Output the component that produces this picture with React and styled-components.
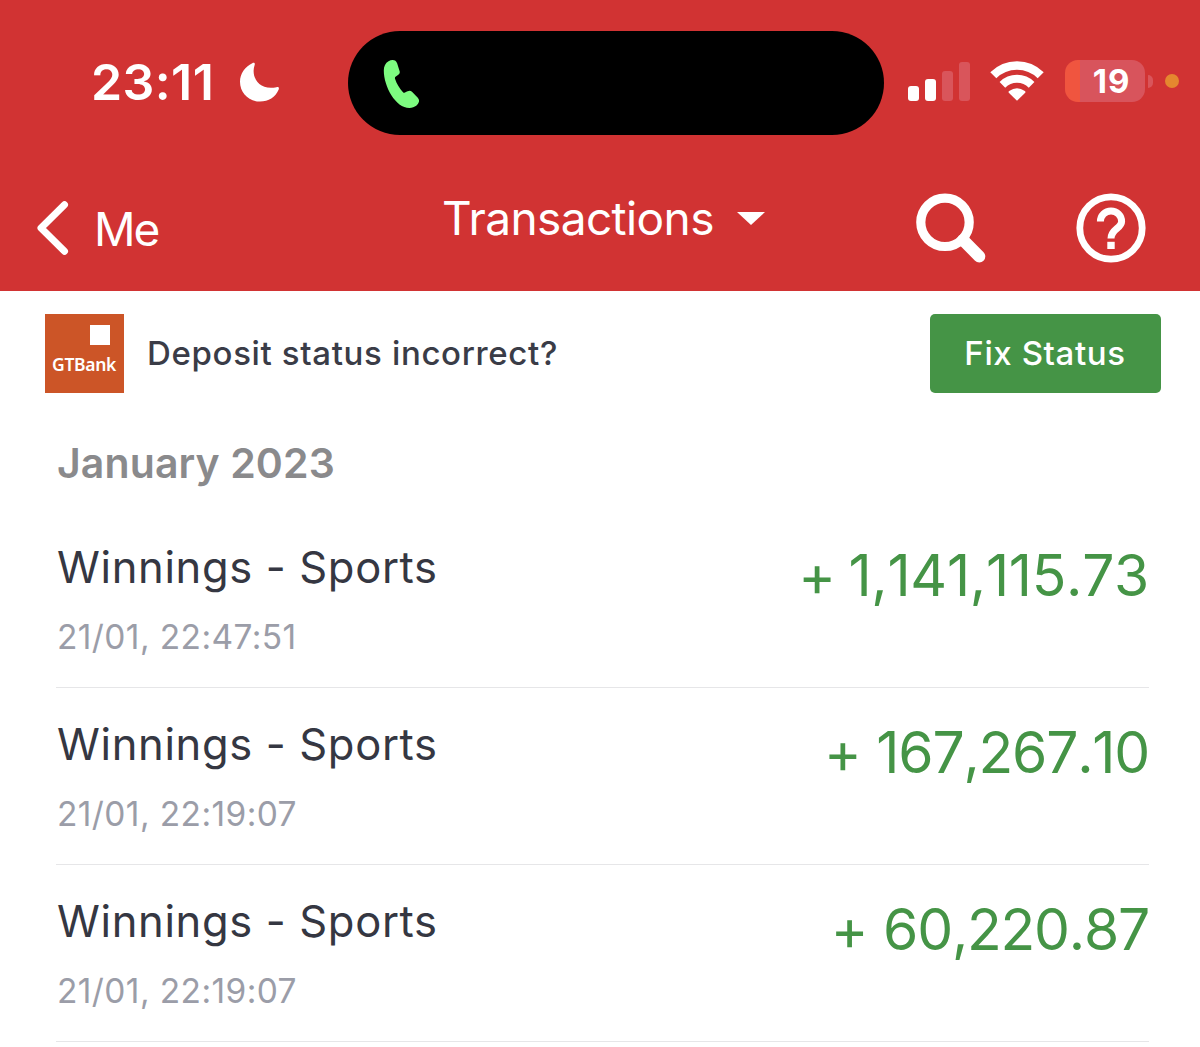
import React from 'react';
import styled, { createGlobalStyle } from 'styled-components';

const GlobalStyle = createGlobalStyle`
  * {
    box-sizing: border-box;
  }
  body {
    margin: 0;
    background-color: #ffffff;
    font-family: Inter, 'Liberation Sans', sans-serif;
  }
  svg {
    display: block;
    flex-shrink: 0;
  }
`;

const Screen = styled.div`
  width: 1200px;
  height: 1047px;
  overflow: hidden;
  background-color: #ffffff;
`;

const Header = styled.header`
  height: 291px;
  background-color: #d13333;
  color: #ffffff;
`;

const StatusBar = styled.div`
  display: grid;
  grid-template-columns: 348px 536px 1fr;
  height: 166px;
  padding-top: 31px;
  align-items: start;
`;

const StatusLeft = styled.div`
  display: flex;
  align-items: center;
  height: 102px;
  padding-left: 91px;
`;

const Clock = styled.span`
  width: 149px;
  font-size: 50px;
  font-weight: 600;
  line-height: 60px;
  letter-spacing: 0.4px;
  white-space: nowrap;
`;

const Island = styled.div`
  height: 104px;
  padding: 28px 0 0 35px;
  border-radius: 52px;
  background-color: #000000;
`;

const StatusRight = styled.div`
  display: flex;
  align-items: center;
  height: 100px;
  padding-left: 24px;
`;

const Signal = styled.div`
  display: flex;
  align-items: flex-end;
  gap: 6px;
  height: 39px;
  margin-right: 20px;
`;

const SignalBar = styled.span`
  width: 11px;
  height: ${(props) => props.$height}px;
  border-radius: 3px;
  background-color: ${(props) => (props.$active ? '#ffffff' : '#d9555b')};
`;

const Battery = styled.div`
  display: flex;
  align-items: center;
  justify-content: center;
  width: 80px;
  height: 42px;
  margin-left: 21px;
  padding-left: 13px;
  border-radius: 13px;
  background: linear-gradient(to right, #f0553f 15px, #d8545c 15px);
  font-size: 33px;
  font-weight: 700;
  line-height: 42px;
  letter-spacing: 1px;
`;

const BatteryCap = styled.span`
  width: 5px;
  height: 13px;
  margin-left: 3px;
  border-radius: 0 6px 6px 0;
  background-color: #d9555b;
`;

const MicDot = styled.span`
  width: 14px;
  height: 14px;
  margin-left: 12px;
  border-radius: 50%;
  background-color: #e5872f;
`;

const NavBar = styled.nav`
  display: grid;
  grid-template-columns: 442px 1fr 284px;
  height: 125px;
`;

const BackLink = styled.div`
  display: flex;
  align-items: center;
  height: 124px;
  padding-left: 36px;
  gap: 24px;
`;

const BackLabel = styled.span`
  padding-top: 2px;
  font-size: 46px;
  font-weight: 400;
  line-height: 56px;
  letter-spacing: -2px;
`;

const PageTitle = styled.div`
  display: flex;
  align-items: center;
  height: 104px;
  font-size: 46px;
  line-height: 56px;
  letter-spacing: -0.6px;
  white-space: nowrap;
  gap: 23px;
`;

const NavActions = styled.div`
  display: flex;
  align-items: center;
  height: 124px;
  gap: 90px;
`;

const Notice = styled.section`
  display: flex;
  align-items: center;
  height: 124px;
  padding: 0 39px 0 45px;
`;

const BankLogo = styled.div`
  display: flex;
  flex-direction: column;
  width: 79px;
  height: 79px;
  padding: 11px 0 0 7px;
  background-color: #cc5527;
  color: #ffffff;
  font-family: 'Noto Sans', 'Open Sans', sans-serif;
  font-size: 17.5px;
  font-weight: 600;
  line-height: 24px;
  letter-spacing: -0.3px;
`;

const LogoSquare = styled.span`
  width: 20px;
  height: 20px;
  margin: 0 0 7px 38px;
  background-color: #ffffff;
`;

const NoticeText = styled.span`
  flex: 1;
  margin-left: 23px;
  color: #3a3c47;
  font-size: 33px;
  font-weight: 500;
  line-height: 42px;
  letter-spacing: 0.65px;
`;

const FixButton = styled.button`
  width: 231px;
  height: 79px;
  padding: 0 1px 0 0;
  border: none;
  border-radius: 5px;
  background-color: #459446;
  color: #ffffff;
  font-family: inherit;
  font-size: 33px;
  font-weight: 500;
  line-height: 42px;
  letter-spacing: 0.6px;
`;

const MonthTitle = styled.h2`
  height: 96px;
  margin: 0;
  padding: 23px 0 0 57px;
  color: #8a8a8c;
  font-size: 41px;
  font-weight: 600;
  line-height: 50px;
  letter-spacing: 0.1px;
`;

const List = styled.ul`
  margin: 0;
  padding: 0 51px 0 56px;
  list-style: none;
`;

const Row = styled.li`
  display: flex;
  justify-content: space-between;
  height: 177px;
  padding-top: 26px;
  border-bottom: 1px solid #e6e6e8;
`;

const RowTitle = styled.div`
  padding-left: 1px;
  color: #353742;
  font-size: 43.5px;
  line-height: 60px;
  letter-spacing: 0.65px;
`;

const RowDate = styled.div`
  margin-top: 20px;
  padding-left: 1px;
  color: #9b9da8;
  font-size: 33.5px;
  line-height: 40px;
  letter-spacing: 0.4px;
`;

const Amount = styled.div`
  padding-top: 2px;
  color: #459446;
  font-size: 57px;
  font-kerning: none;
  line-height: 74px;
  letter-spacing: ${(props) => (props.$tight ? '-1.25px' : '-0.3px')};
  word-spacing: ${(props) => (props.$tight ? '1px' : '-3px')};
`;

const signalBars = [
  { height: 15, active: true },
  { height: 22, active: true },
  { height: 30, active: false },
  { height: 39, active: false },
];

const transactions = [
  { title: 'Winnings - Sports', date: '21/01, 22:47:51', amount: '+ 1,141,115.73' },
  { title: 'Winnings - Sports', date: '21/01, 22:19:07', amount: '+ 167,267.10' },
  { title: 'Winnings - Sports', date: '21/01, 22:19:07', amount: '+ 60,220.87' },
];

const MoonIcon = () => (
  <svg width="40" height="40" viewBox="0 0 40 40" fill="#ffffff">
    <path d="M12.3 1.2C13.8 .4 15.3 1 14.7 2.7C10.5 14.5 18.5 29 36.5 25.2C38.5 24.7 39.4 25.8 38.6 27.7C35.5 35 28.5 39.5 20 39.5C8.8 39.5 0 31 0 19.8C0 11.5 5 4.5 12.3 1.2Z" />
  </svg>
);

const PhoneIcon = () => (
  <svg width="38" height="50" viewBox="0 0 38 50" fill="#7dfc80">
    <path d="M5.5 2.2C9 .2 13 .5 14.2 4.5L16.7 12.5C17.2 15 15.5 15.8 12.5 17.8C11.8 18.3 11.8 19 12.1 20C13.8 25 16.5 29.5 20 33.2C20.6 33.8 21.2 33.9 22 33.5C25.5 31.6 27 30.9 29 32.8L34.8 38.8C38.5 42.6 33.5 49 26.5 49C12.5 49 .8 27.5 .8 11.5C.8 7 2.5 4 5.5 2.2Z" />
  </svg>
);

const WifiIcon = () => (
  <svg width="54" height="40" viewBox="0 0 54 40" fill="none" stroke="#ffffff">
    <path d="M3.3 14.2A33.5 33.5 0 0 1 50.7 14.2" strokeWidth="8.5" />
    <path d="M12.4 23.8A20.8 20.8 0 0 1 41.6 23.8" strokeWidth="8" />
    <path d="M27 39.8L18.8 31.7Q18 30.8 19.2 29.9Q27 24.8 34.8 29.9Q36 30.8 35.2 31.7Z" fill="#ffffff" stroke="none" />
  </svg>
);

const ChevronIcon = () => (
  <svg width="34" height="54" viewBox="0 0 34 54" fill="none" stroke="#ffffff">
    <path d="M28.5 3.8L5 27L28.5 50.2" strokeWidth="7" strokeLinecap="round" strokeLinejoin="round" />
  </svg>
);

const CaretIcon = () => (
  <svg width="28" height="13" viewBox="0 0 28 13" fill="#ffffff">
    <path d="M0 0H28L14 13Z" />
  </svg>
);

const SearchIcon = () => (
  <svg width="70" height="70" viewBox="0 0 70 70" fill="none" stroke="#ffffff">
    <circle cx="29" cy="29.3" r="24.2" strokeWidth="9.2" />
    <path d="M47 47L63.3 63.5" strokeWidth="12" strokeLinecap="round" />
  </svg>
);

const HelpIcon = () => (
  <svg width="70" height="70" viewBox="0 0 70 70" fill="none" stroke="#ffffff">
    <circle cx="35" cy="35" r="31.2" strokeWidth="6.8" />
    <path d="M24.4 28.5A10.6 10.6 0 0 1 45.6 28.5C45.6 35.5 35 36 35 45.5" strokeWidth="7" />
    <path d="M31.3 52.4H38.7" strokeWidth="7.2" />
  </svg>
);

const App = () => {
  return (
    <Screen>
      <GlobalStyle />
      <Header>
        <StatusBar>
          <StatusLeft>
            <Clock>23:11</Clock>
            <MoonIcon />
          </StatusLeft>
          <Island>
            <PhoneIcon />
          </Island>
          <StatusRight>
            <Signal>
              {signalBars.map((bar) => (
                <SignalBar key={bar.height} $height={bar.height} $active={bar.active} />
              ))}
            </Signal>
            <WifiIcon />
            <Battery>19</Battery>
            <BatteryCap />
            <MicDot />
          </StatusRight>
        </StatusBar>
        <NavBar>
          <BackLink>
            <ChevronIcon />
            <BackLabel>Me</BackLabel>
          </BackLink>
          <PageTitle>
            Transactions
            <CaretIcon />
          </PageTitle>
          <NavActions>
            <SearchIcon />
            <HelpIcon />
          </NavActions>
        </NavBar>
      </Header>
      <Notice>
        <BankLogo>
          <LogoSquare />
          GTBank
        </BankLogo>
        <NoticeText>Deposit status incorrect?</NoticeText>
        <FixButton type="button">Fix Status</FixButton>
      </Notice>
      <MonthTitle>January 2023</MonthTitle>
      <List>
        {transactions.map((item) => (
          <Row key={item.amount}>
            <div>
              <RowTitle>{item.title}</RowTitle>
              <RowDate>{item.date}</RowDate>
            </div>
            <Amount $tight={item.amount.length < 14}>{item.amount}</Amount>
          </Row>
        ))}
      </List>
    </Screen>
  );
};

export default App;
